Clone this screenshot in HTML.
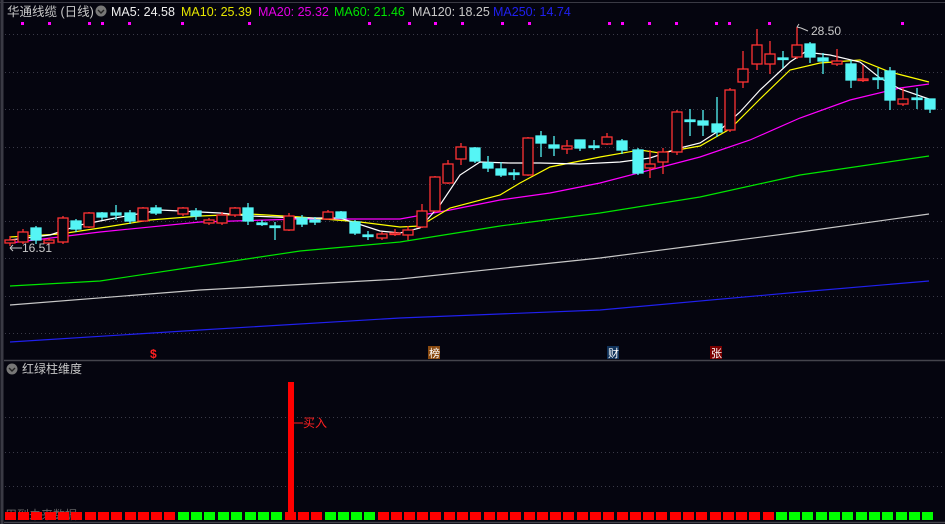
<!DOCTYPE html>
<html><head><meta charset="utf-8"><style>
html,body{margin:0;padding:0;background:#05050f;}
body{width:945px;height:524px;overflow:hidden;position:relative;font-family:"Liberation Sans","Noto Sans CJK SC",sans-serif;}
svg{position:absolute;left:0;top:0;}
</style></head><body>
<svg width="945" height="524" viewBox="0 0 945 524" xmlns="http://www.w3.org/2000/svg" font-family="Liberation Sans, Noto Sans CJK SC, sans-serif">
<rect width="945" height="524" fill="#05050f"/>
<line x1="0" y1="2.5" x2="945" y2="2.5" stroke="#3a3a44"/>
<line x1="2" y1="0" x2="2" y2="524" stroke="#3a3a44" stroke-width="3"/>
<line x1="4" y1="360.5" x2="945" y2="360.5" stroke="#44444c" stroke-width="1.5"/>
<line x1="4" y1="522.5" x2="945" y2="522.5" stroke="#44444c" stroke-width="1.5"/>
<g stroke="#3a3a48" stroke-dasharray="1 3">
<line x1="5" y1="34.5" x2="945" y2="34.5"/><line x1="5" y1="72.5" x2="945" y2="72.5"/>
<line x1="5" y1="109.5" x2="945" y2="109.5"/><line x1="5" y1="147.5" x2="945" y2="147.5"/>
<line x1="5" y1="184.5" x2="945" y2="184.5"/><line x1="5" y1="221.5" x2="945" y2="221.5"/>
<line x1="5" y1="258.5" x2="945" y2="258.5"/><line x1="5" y1="296.5" x2="945" y2="296.5"/>
<line x1="5" y1="333.5" x2="945" y2="333.5"/>
<line x1="5" y1="417.5" x2="945" y2="417.5"/><line x1="5" y1="452.5" x2="945" y2="452.5"/>
<line x1="5" y1="486.5" x2="945" y2="486.5"/>
</g>
<!-- header -->
<text x="7" y="16" font-size="12.5" fill="#c8c8c8">华通线缆 (日线)</text>
<circle cx="101" cy="11" r="5.5" fill="#777"/><path d="M98 10 L101 13 L104 10" stroke="#222" stroke-width="1.4" fill="none"/>
<text x="111" y="16" font-size="12.5" fill="#f0f0f0">MA5: 24.58</text>
<text x="181" y="16" font-size="12.5" fill="#e6e600">MA10: 25.39</text>
<text x="258" y="16" font-size="12.5" fill="#e600e6">MA20: 25.32</text>
<text x="334" y="16" font-size="12.5" fill="#00e600">MA60: 21.46</text>
<text x="412" y="16" font-size="12.5" fill="#c8c8c8">MA120: 18.25</text>
<text x="493" y="16" font-size="12.5" fill="#2020ee">MA250: 14.74</text>
<g fill="#ff00ff">
<rect x="21" y="22" width="3" height="3"/><rect x="48" y="22" width="3" height="3"/><rect x="88" y="22" width="3" height="3"/><rect x="101" y="22" width="3" height="3"/><rect x="128" y="22" width="3" height="3"/><rect x="181" y="22" width="3" height="3"/><rect x="248" y="22" width="3" height="3"/><rect x="368" y="22" width="3" height="3"/><rect x="408" y="22" width="3" height="3"/><rect x="434" y="22" width="3" height="3"/><rect x="461" y="22" width="3" height="3"/><rect x="501" y="22" width="3" height="3"/><rect x="528" y="22" width="3" height="3"/><rect x="608" y="22" width="3" height="3"/><rect x="621" y="22" width="3" height="3"/><rect x="648" y="22" width="3" height="3"/><rect x="675" y="22" width="3" height="3"/><rect x="715" y="22" width="3" height="3"/><rect x="728" y="22" width="3" height="3"/><rect x="768" y="22" width="3" height="3"/><rect x="901" y="22" width="3" height="3"/>
</g>
<!-- MAs -->
<g fill="none" stroke-width="1.2">
<polyline stroke="#2020ee" points="10,342 200,330 400,318 600,310 800,292 929,281"/>
<polyline stroke="#c8c8c8" points="10,305 200,290 400,279 600,258 700,245 800,232 929,214"/>
<polyline stroke="#00e600" points="10,286 100,281 200,266 300,251 400,242 500,226 600,213 700,197 800,175 929,156"/>
<polyline stroke="#ff00ff" points="10,243 100,232 200,222 300,219 400,219 450,210 500,200 550,193 600,183 650,170 700,157 750,140 800,118 850,100 900,88 929,84"/>
<polyline stroke="#ffff00" points="10,237 60,234 100,228 150,220 200,216 250,214 300,217 360,222 400,227 420,226 450,208 500,195 520,183 550,167 600,157 640,150 660,153 700,146 730,129 760,99 790,70 820,63 860,60 890,72 929,82"/>
<polyline stroke="#ffffff" points="10,240 50,235 80,225 115,218 160,210 220,213 250,216 300,218 340,218 380,231 400,233 420,228 440,205 460,175 480,162 510,163 540,163 580,164 620,162 650,158 680,148 700,143 720,130 740,112 760,90 790,62 805,52 830,55 860,62 880,78 900,89 929,99"/>
</g>
<!-- candles: red = outline, cyan = filled -->
<g stroke-width="1.3">
<g stroke="#ff3333" fill="#05050f">
<line x1="10" y1="236" x2="10" y2="246"/><rect x="5" y="240" width="10" height="3"/>
<line x1="23" y1="229" x2="23" y2="244"/><rect x="18" y="232" width="10" height="10"/>
<line x1="49" y1="238" x2="49" y2="245"/><rect x="44" y="240" width="10" height="3"/>
<line x1="63" y1="216" x2="63" y2="244"/><rect x="58" y="218" width="10" height="24"/>
<line x1="89" y1="212" x2="89" y2="228"/><rect x="84" y="213" width="10" height="14"/>
<line x1="143" y1="207" x2="143" y2="222"/><rect x="138" y="208" width="10" height="13"/>
<line x1="183" y1="207" x2="183" y2="216"/><rect x="178" y="208" width="10" height="6"/>
<line x1="209" y1="218" x2="209" y2="225"/><rect x="204" y="220" width="10" height="3"/>
<line x1="222" y1="212" x2="222" y2="225"/><rect x="217" y="215" width="10" height="8"/>
<line x1="235" y1="207" x2="235" y2="217"/><rect x="230" y="208" width="10" height="7"/>
<line x1="289" y1="213" x2="289" y2="231"/><rect x="284" y="216" width="10" height="14"/>
<line x1="328" y1="210" x2="328" y2="220"/><rect x="323" y="212" width="10" height="7"/>
<line x1="382" y1="232" x2="382" y2="240"/><rect x="377" y="234" width="10" height="4"/>
<line x1="395" y1="229" x2="395" y2="236"/><rect x="390" y="233" width="10" height="1.5"/>
<line x1="408" y1="226" x2="408" y2="240"/><rect x="403" y="230" width="10" height="5"/>
<line x1="422" y1="204" x2="422" y2="228"/><rect x="417" y="211" width="10" height="16"/>
<line x1="435" y1="176" x2="435" y2="212"/><rect x="430" y="177" width="10" height="34"/>
<line x1="448" y1="160" x2="448" y2="184"/><rect x="443" y="164" width="10" height="19"/>
<line x1="461" y1="143" x2="461" y2="165"/><rect x="456" y="147" width="10" height="12"/>
<line x1="528" y1="137" x2="528" y2="176"/><rect x="523" y="138" width="10" height="37"/>
<line x1="567" y1="140" x2="567" y2="154"/><rect x="562" y="146" width="10" height="3"/>
<line x1="607" y1="133" x2="607" y2="145"/><rect x="602" y="137" width="10" height="7"/>
<line x1="650" y1="150" x2="650" y2="178"/><rect x="645" y="164" width="10" height="4"/>
<line x1="663" y1="148" x2="663" y2="174"/><rect x="658" y="152" width="10" height="10"/>
<line x1="677" y1="110" x2="677" y2="155"/><rect x="672" y="112" width="10" height="40"/>
<line x1="730" y1="88" x2="730" y2="132"/><rect x="725" y="90" width="10" height="40"/>
<line x1="743" y1="51" x2="743" y2="88"/><rect x="738" y="69" width="10" height="13"/>
<line x1="757" y1="29" x2="757" y2="70"/><rect x="752" y="45" width="10" height="19"/>
<line x1="770" y1="41" x2="770" y2="74"/><rect x="765" y="54" width="10" height="10"/>
<line x1="797" y1="27" x2="797" y2="59"/><rect x="792" y="45" width="10" height="12"/>
<line x1="837" y1="49" x2="837" y2="66"/><rect x="832" y="61" width="10" height="3"/>
<line x1="863" y1="65" x2="863" y2="82"/><rect x="858" y="79" width="10" height="1.5"/>
<line x1="903" y1="88" x2="903" y2="106"/><rect x="898" y="99" width="10" height="5"/>
</g>
<g stroke="#55f5f5" fill="#55f5f5">
<line x1="36" y1="226" x2="36" y2="244"/><rect x="31" y="228" width="10" height="12"/>
<line x1="76" y1="219" x2="76" y2="232"/><rect x="71" y="221" width="10" height="8"/>
<line x1="102" y1="212" x2="102" y2="220"/><rect x="97" y="213" width="10" height="4"/>
<line x1="116" y1="205" x2="116" y2="220"/><rect x="111" y="213" width="10" height="2"/>
<line x1="130" y1="210" x2="130" y2="224"/><rect x="125" y="213" width="10" height="8"/>
<line x1="156" y1="205" x2="156" y2="215"/><rect x="151" y="208" width="10" height="5"/>
<line x1="196" y1="208" x2="196" y2="220"/><rect x="191" y="211" width="10" height="5"/>
<line x1="248" y1="203" x2="248" y2="225"/><rect x="243" y="208" width="10" height="13"/>
<line x1="262" y1="220" x2="262" y2="226"/><rect x="257" y="223" width="10" height="1.5"/>
<line x1="275" y1="222" x2="275" y2="240"/><rect x="270" y="226" width="10" height="1.5"/>
<line x1="302" y1="215" x2="302" y2="227"/><rect x="297" y="218" width="10" height="6"/>
<line x1="315" y1="217" x2="315" y2="225"/><rect x="310" y="220" width="10" height="2"/>
<line x1="341" y1="211" x2="341" y2="219"/><rect x="336" y="212" width="10" height="6"/>
<line x1="355" y1="220" x2="355" y2="235"/><rect x="350" y="222" width="10" height="11"/>
<line x1="368" y1="231" x2="368" y2="240"/><rect x="363" y="235" width="10" height="1.5"/>
<line x1="475" y1="147" x2="475" y2="163"/><rect x="470" y="148" width="10" height="13"/>
<line x1="488" y1="156" x2="488" y2="172"/><rect x="483" y="163" width="10" height="5"/>
<line x1="501" y1="162" x2="501" y2="177"/><rect x="496" y="169" width="10" height="6"/>
<line x1="514" y1="169" x2="514" y2="180"/><rect x="509" y="173" width="10" height="1.5"/>
<line x1="541" y1="131" x2="541" y2="157"/><rect x="536" y="136" width="10" height="7"/>
<line x1="554" y1="136" x2="554" y2="156"/><rect x="549" y="145" width="10" height="3"/>
<line x1="580" y1="140" x2="580" y2="151"/><rect x="575" y="140" width="10" height="8"/>
<line x1="594" y1="140" x2="594" y2="150"/><rect x="589" y="146" width="10" height="1.5"/>
<line x1="622" y1="139" x2="622" y2="154"/><rect x="617" y="141" width="10" height="9"/>
<line x1="638" y1="148" x2="638" y2="175"/><rect x="633" y="150" width="10" height="23"/>
<line x1="690" y1="109" x2="690" y2="136"/><rect x="685" y="120" width="10" height="1.5"/>
<line x1="703" y1="110" x2="703" y2="136"/><rect x="698" y="121" width="10" height="4"/>
<line x1="717" y1="97" x2="717" y2="137"/><rect x="712" y="124" width="10" height="8"/>
<line x1="783" y1="51" x2="783" y2="68"/><rect x="778" y="58" width="10" height="1.5"/>
<line x1="810" y1="42" x2="810" y2="63"/><rect x="805" y="44" width="10" height="13"/>
<line x1="823" y1="53" x2="823" y2="74"/><rect x="818" y="58" width="10" height="3"/>
<line x1="851" y1="60" x2="851" y2="88"/><rect x="846" y="64" width="10" height="16"/>
<line x1="878" y1="68" x2="878" y2="89"/><rect x="873" y="78" width="10" height="1.5"/>
<line x1="890" y1="67" x2="890" y2="110"/><rect x="885" y="71" width="10" height="29"/>
<line x1="917" y1="88" x2="917" y2="109"/><rect x="912" y="98" width="10" height="1.5"/>
<line x1="930" y1="99" x2="930" y2="113"/><rect x="925" y="99" width="10" height="10"/>
</g>
</g>
<!-- labels -->
<path d="M797 27 L799 24 M797 27 L801 28 M801 28 L808 31" stroke="#c8c8c8" fill="none"/>
<text x="811" y="35" font-size="12" fill="#c8c8c8">28.50</text>
<path d="M10 248 L22 248 M10 248 L13 245 M10 248 L13 251" stroke="#c8c8c8" fill="none"/>
<text x="22" y="252" font-size="12" fill="#c8c8c8">16.51</text>
<text x="150" y="358" font-size="12" font-weight="bold" fill="#ff2020">$</text>
<rect x="428" y="346" width="12" height="13" fill="#8a4a10"/><text x="429" y="357" font-size="11" fill="#fff">榜</text>
<rect x="607" y="346" width="12" height="13" fill="#10325a"/><text x="608" y="357" font-size="11" fill="#fff">财</text>
<rect x="710" y="346" width="12" height="13" fill="#7a0000"/><text x="711" y="357" font-size="11" fill="#fff">张</text>
<!-- lower panel -->
<circle cx="12" cy="369" r="5.5" fill="#777"/><path d="M9 368 L12 371 L15 368" stroke="#222" stroke-width="1.4" fill="none"/>
<text x="22" y="373" font-size="12" fill="#c8c8c8">红绿柱维度</text>
<rect x="288" y="382" width="6" height="135" fill="#ff0000"/>
<line x1="294" y1="423" x2="303" y2="423" stroke="#ff2020"/>
<text x="303" y="427" font-size="12" fill="#ff2020">买入</text>
<text x="5" y="519" font-size="12" fill="#666">用到未来数据</text>
<g fill="#ff0000">
<rect x="5" y="512" width="11" height="8"/><rect x="18" y="512" width="11" height="8"/><rect x="31" y="512" width="11" height="8"/><rect x="45" y="512" width="11" height="8"/><rect x="58" y="512" width="11" height="8"/><rect x="71" y="512" width="11" height="8"/><rect x="85" y="512" width="11" height="8"/><rect x="98" y="512" width="11" height="8"/><rect x="111" y="512" width="11" height="8"/><rect x="125" y="512" width="11" height="8"/><rect x="138" y="512" width="11" height="8"/><rect x="151" y="512" width="11" height="8"/><rect x="164" y="512" width="11" height="8"/>
<rect x="285" y="512" width="11" height="8"/><rect x="298" y="512" width="11" height="8"/><rect x="311" y="512" width="11" height="8"/>
<rect x="378" y="512" width="11" height="8"/><rect x="391" y="512" width="11" height="8"/><rect x="404" y="512" width="11" height="8"/><rect x="417" y="512" width="11" height="8"/><rect x="430" y="512" width="11" height="8"/><rect x="444" y="512" width="11" height="8"/><rect x="457" y="512" width="11" height="8"/><rect x="470" y="512" width="11" height="8"/><rect x="484" y="512" width="11" height="8"/><rect x="497" y="512" width="11" height="8"/><rect x="510" y="512" width="11" height="8"/><rect x="524" y="512" width="11" height="8"/><rect x="537" y="512" width="11" height="8"/><rect x="550" y="512" width="11" height="8"/><rect x="563" y="512" width="11" height="8"/><rect x="577" y="512" width="11" height="8"/><rect x="590" y="512" width="11" height="8"/><rect x="603" y="512" width="11" height="8"/><rect x="617" y="512" width="11" height="8"/><rect x="630" y="512" width="11" height="8"/><rect x="643" y="512" width="11" height="8"/><rect x="656" y="512" width="11" height="8"/><rect x="670" y="512" width="11" height="8"/><rect x="683" y="512" width="11" height="8"/><rect x="696" y="512" width="11" height="8"/><rect x="710" y="512" width="11" height="8"/><rect x="723" y="512" width="11" height="8"/><rect x="736" y="512" width="11" height="8"/><rect x="749" y="512" width="11" height="8"/><rect x="763" y="512" width="11" height="8"/>
</g>
<g fill="#00ff00">
<rect x="178" y="512" width="11" height="8"/><rect x="191" y="512" width="11" height="8"/><rect x="204" y="512" width="11" height="8"/><rect x="218" y="512" width="11" height="8"/><rect x="231" y="512" width="11" height="8"/><rect x="245" y="512" width="11" height="8"/><rect x="258" y="512" width="11" height="8"/><rect x="271" y="512" width="11" height="8"/>
<rect x="325" y="512" width="11" height="8"/><rect x="338" y="512" width="11" height="8"/><rect x="351" y="512" width="11" height="8"/><rect x="364" y="512" width="11" height="8"/>
<rect x="776" y="512" width="11" height="8"/><rect x="789" y="512" width="11" height="8"/><rect x="802" y="512" width="11" height="8"/><rect x="816" y="512" width="11" height="8"/><rect x="829" y="512" width="11" height="8"/><rect x="842" y="512" width="11" height="8"/><rect x="856" y="512" width="11" height="8"/><rect x="869" y="512" width="11" height="8"/><rect x="882" y="512" width="11" height="8"/><rect x="896" y="512" width="11" height="8"/><rect x="909" y="512" width="11" height="8"/><rect x="922" y="512" width="11" height="8"/>
</g>
</svg>
</body></html>
